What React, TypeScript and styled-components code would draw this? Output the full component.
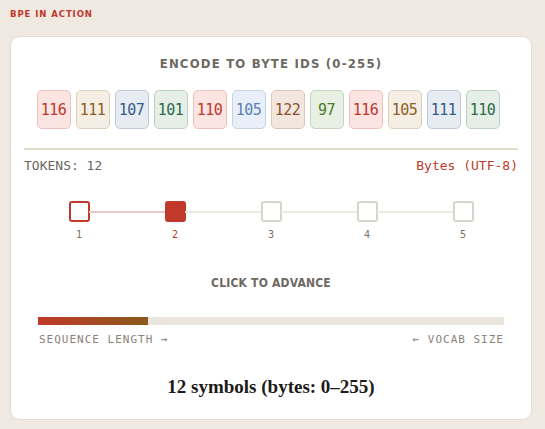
import React from 'react';
import styled, { createGlobalStyle } from 'styled-components';

const GlobalStyle = createGlobalStyle`
	html, body {
		margin: 0;
		padding: 0;
		background: #efe9e1;
	}
`;

const condensed = `"Liberation Sans Narrow", "DejaVu Sans Condensed", sans-serif`;
const mono = `"DejaVu Sans Mono", "Liberation Mono", monospace`;

type Tone = { bg: string; border: string; text: string };

const tones: Record<string, Tone> = {
	red: { bg: '#fbe4e2', border: '#efc1bc', text: '#c0392b' },
	tan: { bg: '#f4eee4', border: '#ddd0ba', text: '#8f5f1e' },
	blue: { bg: '#e7ebf2', border: '#bfc9d8', text: '#355d8c' },
	green: { bg: '#e5efe8', border: '#bcd1c2', text: '#2e6b48' },
	sky: { bg: '#e9eff8', border: '#c6d3e6', text: '#5a80b6' },
	clay: { bg: '#f2e6df', border: '#ddc6b8', text: '#8a5433' },
	moss: { bg: '#e8efe3', border: '#c6d5bb', text: '#4e7a2c' },
};

const bytes: { value: number; tone: string }[] = [
	{ value: 116, tone: 'red' },
	{ value: 111, tone: 'tan' },
	{ value: 107, tone: 'blue' },
	{ value: 101, tone: 'green' },
	{ value: 110, tone: 'red' },
	{ value: 105, tone: 'sky' },
	{ value: 122, tone: 'clay' },
	{ value: 97, tone: 'moss' },
	{ value: 116, tone: 'red' },
	{ value: 105, tone: 'tan' },
	{ value: 111, tone: 'blue' },
	{ value: 110, tone: 'green' },
];

const Page = styled.div`
	width: 545px;
	height: 429px;
	box-sizing: border-box;
	padding: 8px 13px 0 10px;
`;

const Kicker = styled.div`
	font-family: ${condensed};
	font-weight: 700;
	font-size: 9.5px;
	letter-spacing: 0.9px;
	color: #c0392b;
	line-height: 11px;
	height: 11px;
`;

const Card = styled.div`
	margin-top: 17px;
	background: #fff;
	border: 1px solid #e4ddd2;
	border-radius: 10px;
	box-sizing: border-box;
	height: 384px;
	padding: 19px 13px 0 13px;
	display: flex;
	flex-direction: column;
	align-items: stretch;
`;

const Heading = styled.div`
	font-family: ${condensed};
	font-weight: 700;
	font-size: 13px;
	letter-spacing: 1.2px;
	color: #6e6862;
	text-align: center;
	line-height: 16px;
`;

const ByteRow = styled.div`
	margin-top: 18px;
	padding-right: 6px;
	display: flex;
	justify-content: center;
	gap: 5px;
`;

const Byte = styled.div<{ $tone: Tone }>`
	width: 34px;
	height: 39px;
	box-sizing: border-box;
	border-radius: 5px;
	background: ${(p) => p.$tone.bg};
	border: 1px solid ${(p) => p.$tone.border};
	color: ${(p) => p.$tone.text};
	font-family: ${mono};
	font-size: 15px;
	display: flex;
	align-items: center;
	justify-content: center;
	letter-spacing: -0.5px;
`;

const Divider = styled.div`
	margin-top: 19px;
	height: 2px;
	background: #e2ddcd;
`;

const InfoRow = styled.div`
	margin-top: 8px;
	display: flex;
	justify-content: space-between;
	font-family: ${mono};
	font-size: 13px;
	line-height: 16px;
`;

const Muted = styled.span`
	color: #6b6660;
`;

const Accent = styled.span`
	color: #c0392b;
`;

const Stepper = styled.div`
	margin-top: 27px;
	display: grid;
	grid-template-columns: repeat(5, 96px);
	justify-content: center;
`;

const Step = styled.div<{ $line?: string; $last?: boolean }>`
	position: relative;
	display: flex;
	flex-direction: column;
	align-items: center;
	gap: 7px;

	&::after {
		content: '';
		display: ${(p) => (p.$last ? 'none' : 'block')};
		position: absolute;
		top: 10px;
		left: 58px;
		width: 76px;
		height: 2px;
		background: ${(p) => p.$line || '#ece9e3'};
	}
`;

const Box = styled.div<{ $state: 'done' | 'active' | 'idle' }>`
	width: 21px;
	height: 21px;
	box-sizing: border-box;
	border-radius: 3px;
	border: 2px solid ${(p) => (p.$state === 'idle' ? '#d9d4c9' : '#c0392b')};
	background: ${(p) => (p.$state === 'active' ? '#c0392b' : '#fff')};
`;

const StepLabel = styled.div<{ $active?: boolean }>`
	font-family: ${mono};
	font-size: 10px;
	line-height: 12px;
	color: ${(p) => (p.$active ? '#c0392b' : '#77716a')};
`;

const Advance = styled(Heading)`
	margin-top: 34px;
	font-size: 12px;
	letter-spacing: 0.2px;
`;

const Track = styled.div`
	margin: 26px 14px 0 14px;
	height: 8px;
	background: #ebe6dd;
`;

const Fill = styled.div`
	height: 100%;
	background: linear-gradient(90deg, #c0392b, #8b5a1a);
`;

const Legend = styled.div`
	margin: 8px 14px 0 15px;
	display: flex;
	justify-content: space-between;
	font-family: ${mono};
	font-size: 11px;
	letter-spacing: 1px;
	color: #8a837a;
	line-height: 14px;
`;

const Summary = styled.div`
	margin-top: 29px;
	text-align: center;
	font-family: "Liberation Serif", "DejaVu Serif", serif;
	font-weight: 700;
	font-size: 19px;
	color: #1d1a17;
`;

const steps = [1, 2, 3, 4, 5];

const App = () => {
	const current = 2;
	return (
		<Page>
			<GlobalStyle />
			<Kicker>BPE IN ACTION</Kicker>
			<Card>
				<Heading>ENCODE TO BYTE IDS (0-255)</Heading>
				<ByteRow>
					{bytes.map((b, i) => (
						<Byte key={i} $tone={tones[b.tone]}>{b.value}</Byte>
					))}
				</ByteRow>
				<Divider />
				<InfoRow>
					<Muted>TOKENS: 12</Muted>
					<Accent>Bytes (UTF-8)</Accent>
				</InfoRow>
				<Stepper>
					{steps.map((s) => (
						<Step
							key={s}
							$last={s === steps.length}
							$line={s < current ? '#ecc9c5' : undefined}
						>
							<Box $state={s < current ? 'done' : s === current ? 'active' : 'idle'} />
							<StepLabel $active={s === current}>{s}</StepLabel>
						</Step>
					))}
				</Stepper>
				<Advance>CLICK TO ADVANCE</Advance>
				<Track>
					<Fill style={{ width: `${(110 / 467) * 100}%` }} />
				</Track>
				<Legend>
					<span>SEQUENCE LENGTH →</span>
					<span>← VOCAB SIZE</span>
				</Legend>
				<Summary>12 symbols (bytes: 0–255)</Summary>
			</Card>
		</Page>
	);
};

export default App;
